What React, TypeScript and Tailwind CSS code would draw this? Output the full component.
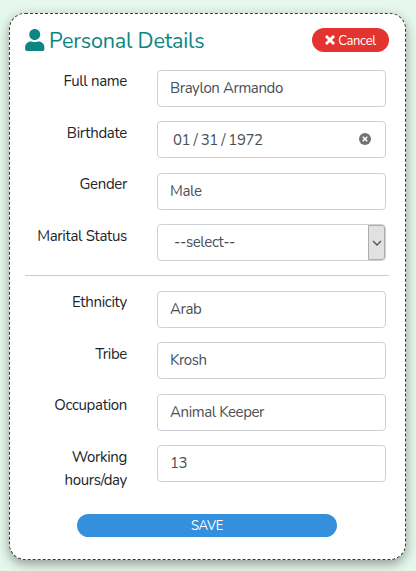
import type { ReactNode } from "react";

const box =
  "block h-[37px] w-[229px] rounded-[4px] border border-[#cdd1d5] bg-white px-3 tracking-[-0.4px] text-[#495057] outline-none";

function Row({ label, children }: { label: ReactNode; children: ReactNode }) {
  return (
    <div className="mb-[14.44px] flex h-[37px] items-start">
      <label className="w-[102px] shrink-0 pt-[0.4px] text-right leading-[23px] tracking-[-0.33px] text-[#212529]">{label}</label>
      <div className="ml-[30px]">{children}</div>
    </div>
  );
}

function TextField({ value }: { value: string }) {
  return <input type="text" defaultValue={value} className={`${box} pb-[1px]`} />;
}

export default function App() {
  return (
    <div
      className="h-[571px] w-[416px] overflow-hidden bg-[#e6f8ed] pl-[9px] pt-[13px] text-[15px]"
      style={{ fontFamily: 'Nunito, Lato, "Open Sans", sans-serif' }}
    >
      <form className="h-[547px] w-[397px] rounded-[16px] border border-dashed border-[#343a40] bg-white pl-[15px] pt-[14px] shadow-[0_4px_12px_rgba(0,0,0,0.38)]">
        <header className="mb-[18px] flex h-[24px] w-[364px] items-center justify-between">
          <h1 className="flex items-center text-[21.6px] leading-[24px] text-[#0e8583]">
            <svg viewBox="0 0 448 512" className="mr-[4.5px] h-[22px] w-[19.5px]" fill="currentColor">
              <path d="M224 256c70.7 0 128-57.3 128-128S294.700 0 224 0 96 57.300 96 128s57.300 128 128 128zm89.600 32h-16.700c-22.200 10.200-46.900 16-72.900 16s-50.600-5.800-72.900-16h-16.700C60.200 288 0 348.200 0 422.400V464c0 26.500 21.500 48 48 48h352c26.500 0 48-21.500 48-48v-41.600c0-74.200-60.200-134.400-134.400-134.400z" />
            </svg>
            <span className="pt-[2px] tracking-[-0.2px]">Personal Details</span>
          </h1>
          <button type="button" className="flex h-[24px] w-[77px] items-center justify-center rounded-full bg-[#e3342f] text-[13px] leading-[18px] text-white">
            <svg viewBox="0 0 10 10" className="mr-[3px] size-[10px]" fill="none" stroke="currentColor" strokeWidth="2.8">
              <path d="M1 1l8 8M9 1l-8 8" />
            </svg>
            <span className="pt-px tracking-[-0.3px]">Cancel</span>
          </button>
        </header>

        <Row label="Full name"><TextField value="Braylon Armando" /></Row>
        <Row label="Birthdate">
          <div className={`${box} flex! items-center justify-between pl-[15px] pr-[14px]`}>
            <span className="flex gap-[3.3px]">
              <span>01</span><span>/</span><span>31</span><span>/</span><span>1972</span>
            </span>
            <svg viewBox="0 0 12 12" className="size-[12px] -translate-y-px">
              <circle cx="6" cy="6" r="6" fill="#737373" />
              <path d="M3.700 3.700l4.600 4.600M8.300 3.700L3.700 8.300" stroke="#fff" strokeWidth="1.5" />
            </svg>
          </div>
        </Row>
        <Row label="Gender"><TextField value="Male" /></Row>
        <Row label="Marital Status">
          <div className={`${box} flex! items-center justify-between overflow-hidden pl-[16px] pr-0`}>
            <span className="pb-[2px]">--select--</span>
            <span className="flex h-full w-[17px] items-center justify-center rounded-r-[3px] border border-[#adadad] bg-[#e1e1e1]">
              <svg viewBox="0 0 10 6" className="h-[6px] w-[10px]" fill="none" stroke="#505050" strokeWidth="1.3">
                <path d="M1 1l4 4 4-4" />
              </svg>
            </span>
          </div>
        </Row>
        <hr className="-mt-[0.8px] mb-[15px] w-[364px] border-[#ccc]" />
        <Row label="Ethnicity"><TextField value="Arab" /></Row>
        <Row label="Tribe"><TextField value="Krosh" /></Row>
        <Row label="Occupation"><TextField value="Animal Keeper" /></Row>
        <Row label={<>Working<br />hours/day</>}><TextField value="13" /></Row>
        <button type="button" className="ml-[52px] mt-[32px] block h-[23px] w-[260px] rounded-full bg-[#3490dc] text-[13px] leading-[24px] tracking-[-0.3px] text-white">
          SAVE
        </button>
      </form>
    </div>
  );
}
